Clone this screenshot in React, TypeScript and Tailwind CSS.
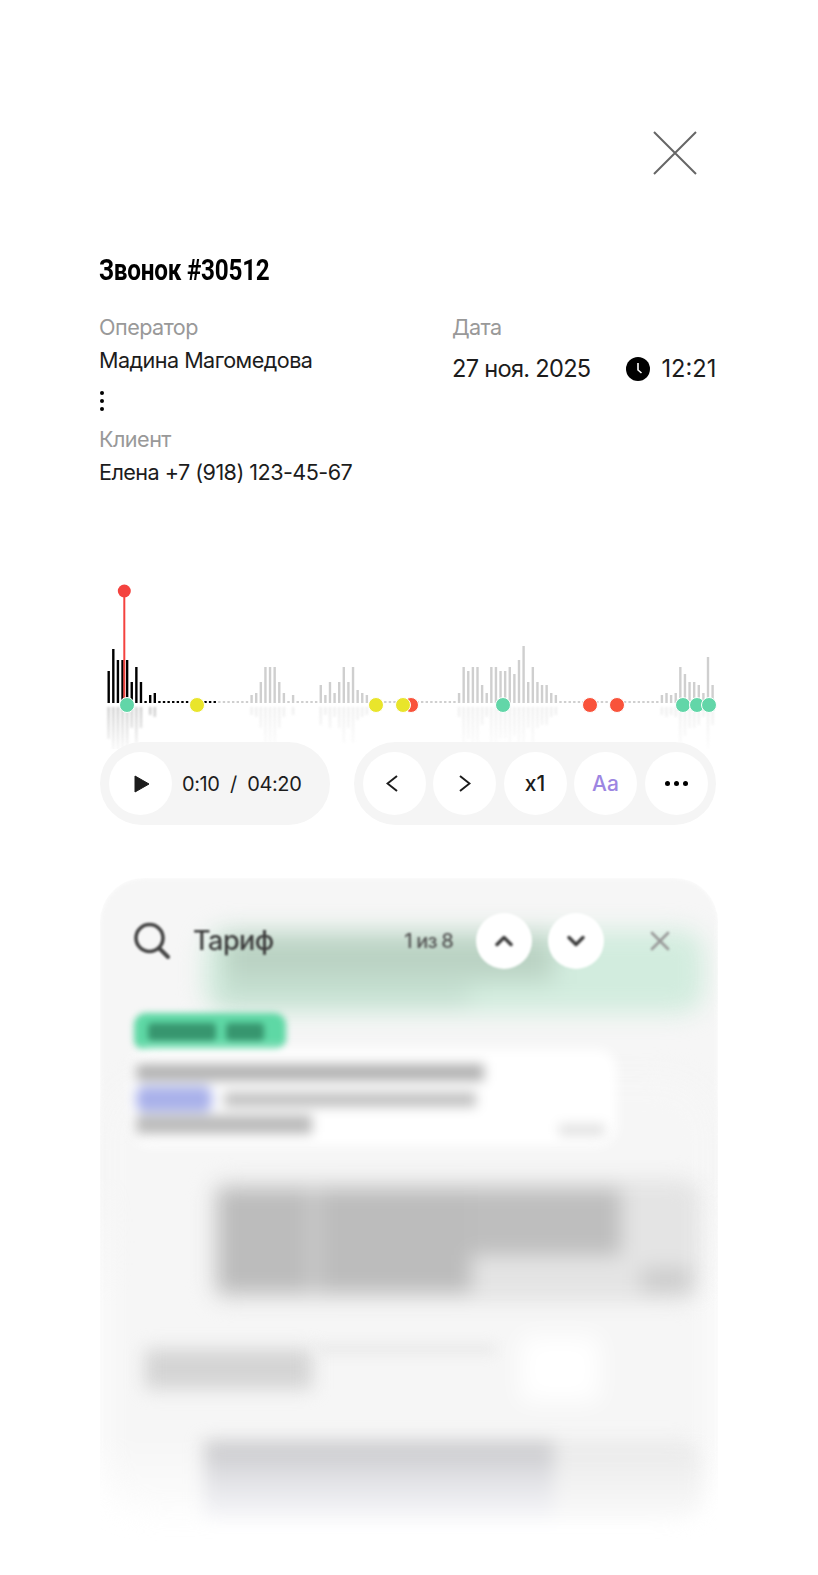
import React from "react";
import { ChevronDown, ChevronUp, X } from "lucide-react";

const PITCH = 4.61;
const START = 108.7;
const BASE = 123;

const buildBars = () => {
    const heights: number[] = new Array(132).fill(2);
    const put = (from: number, values: number[]) => values.forEach((v, i) => (heights[from + i] = v));
    put(0, [32, 54, 43, 43, 43, 21, 36, 21, 2, 8, 10]);
    put(31, [8, 10, 21, 36, 36, 36, 21, 10, 2, 8]);
    put(46, [18, 8, 21, 10, 21, 36, 21, 36, 13, 10, 8]);
    put(76, [10, 36, 32, 36, 36, 18, 10, 36, 36, 32, 32, 36, 29, 43, 57, 21, 36, 21, 18, 18, 10, 8]);
    put(120, [8, 10, 8, 10, 36, 29, 21, 21, 18, 10, 46, 18]);
    return heights;
};

const bars = buildBars();

const markers = [
    { x: 411, color: "#f9533b" },
    { x: 127, color: "#62d6a8" },
    { x: 197, color: "#e9e52b" },
    { x: 376, color: "#e9e52b" },
    { x: 403, color: "#e9e52b" },
    { x: 503, color: "#62d6a8" },
    { x: 590, color: "#f9533b" },
    { x: 617, color: "#f9533b" },
    { x: 683, color: "#62d6a8" },
    { x: 697, color: "#62d6a8" },
    { x: 709, color: "#62d6a8" },
];

const Waveform = () => (
    <svg width="818" height="162" viewBox="0 0 818 162" className="-ml-[100px] block overflow-visible">
        <defs>
            <linearGradient id="fade" x1="0" y1="0" x2="0" y2="1">
                <stop offset="0" stopColor="#fff" stopOpacity="0.4" />
                <stop offset="1" stopColor="#fff" stopOpacity="0.05" />
            </linearGradient>
            <mask id="reflect" maskUnits="userSpaceOnUse" x="0" y={BASE + 2} width="818" height="44">
                <rect x="0" y={BASE + 2} width="818" height="44" fill="url(#fade)" />
            </mask>
            <filter id="soft" x="-5%" y="-20%" width="110%" height="140%">
                <feGaussianBlur stdDeviation="1.1" />
            </filter>
        </defs>

        <g mask="url(#reflect)">
            <g filter="url(#soft)">
                {bars.map((h, i) =>
                    h > 2 ? (
                        <rect
                            key={i}
                            x={START + i * PITCH - 1.2}
                            y={BASE + 4}
                            width="2.4"
                            height={h}
                            fill={i < 24 ? "#777" : "#d4d4d4"}
                        />
                    ) : null,
                )}
            </g>
        </g>

        {bars.map((h, i) => (
            <rect
                key={i}
                x={START + i * PITCH - 1.2}
                y={BASE - h}
                width="2.4"
                height={h}
                fill={i < 24 ? "#000" : "#cfcfcf"}
            />
        ))}

        <line x1="124.3" y1="11" x2="124.3" y2={BASE} stroke="#f4433f" strokeWidth="2" />
        <circle cx="124.3" cy="11" r="6.5" fill="#f4433f" />

        {markers.map((m) => (
            <circle key={m.x} cx={m.x} cy={BASE + 2} r="7.5" fill={m.color} stroke="#fff" strokeWidth="1" />
        ))}
    </svg>
);

const RoundButton = ({ children }: { children: React.ReactNode }) => (
    <div className="flex h-[63px] w-[63px] items-center justify-center rounded-full bg-white">{children}</div>
);

const SearchBar = () => (
    <div className="absolute inset-x-0 top-[35px] z-10 flex h-[56px] items-center pl-[33px] pr-[42px] text-[#3d3d3d] blur-[1px]">
        <svg width="38" height="38" viewBox="0 0 38 38" fill="none" className="shrink-0">
            <circle cx="16.5" cy="16" r="13.5" stroke="#444" strokeWidth="3.6" />
            <path d="M26 26 L35 35" stroke="#444" strokeWidth="4" strokeLinecap="round" />
        </svg>
        <span className="ml-[22px] text-[27px] font-medium tracking-[-0.02em]">Тариф</span>
        <span className="ml-auto text-[20px] font-medium tracking-[-0.04em] text-[#555]">1 из 8</span>
        <div className="ml-[23px] flex h-[56px] w-[56px] items-center justify-center rounded-full bg-white">
            <ChevronUp className="h-7 w-7" strokeWidth={3} />
        </div>
        <div className="ml-[16px] flex h-[56px] w-[56px] items-center justify-center rounded-full bg-white">
            <ChevronDown className="h-7 w-7" strokeWidth={3} />
        </div>
        <X className="ml-[40px] h-8 w-8 text-[#999]" strokeWidth={2} />
    </div>
);

const Conversation = () => (
    <div className="relative h-[665px] w-full">
        <div className="absolute inset-x-0 top-0 h-[430px] rounded-t-[44px] bg-[#f6f6f6] blur-[2px] [mask-image:linear-gradient(to_bottom,black_70%,transparent)]" />
        <div className="absolute inset-x-[2px] bottom-[20px] top-[200px] rounded-[56px] bg-[#f6f6f6] blur-[14px]" />
        <SearchBar />
        <div className="relative flex flex-col pt-[52px]">
            <div className="relative ml-[104px] mr-[14px] h-[83px] rounded-[24px] bg-[#d2ecde] blur-[12px]">
                <div className="absolute left-[20px] right-[150px] top-[4px] h-[46px] bg-[#bad2c3]" />
                <div className="absolute bottom-[12px] left-[16px] h-[12px] w-[250px] bg-[#bbd6c7]" />
            </div>
            <div className="ml-[34px] flex h-[38px] w-[152px] items-center gap-[10px] rounded-[12px] bg-[#5ed8a5] px-[14px] blur-[3px]">
                <div className="h-[18px] w-[68px] rounded bg-[#37966f]" />
                <div className="h-[18px] w-[38px] rounded bg-[#37966f]" />
            </div>
            <div className="relative ml-[30px] mt-[-2px] h-[97px] w-[487px] rounded-[20px] bg-white blur-[6px]">
                <div className="ml-[6px] mt-[15px] h-[17px] w-[348px] bg-[#b2b2b2]" />
                <div className="mt-[5px] flex items-center">
                    <div className="ml-[6px] h-[26px] w-[76px] rounded-lg bg-[#a9b1ea]" />
                    <div className="ml-[12px] h-[15px] w-[252px] bg-[#c2c2c2]" />
                </div>
                <div className="ml-[6px] mt-[3px] h-[19px] w-[176px] bg-[#bbbbbb]" />
                <div className="absolute bottom-[10px] right-[12px] h-[12px] w-[46px] bg-[#e2e2e2]" />
            </div>
            <div className="relative ml-[109px] mr-[18px] mt-[33px] h-[123px] rounded-[20px] bg-[#e4e4e4] blur-[10px]">
                <div className="absolute left-[10px] top-[10px] h-[103px] w-[88px] bg-[#bcbcbc]" />
                <div className="absolute left-[98px] top-[10px] h-[103px] w-[14px] bg-[#cacaca]" />
                <div className="absolute left-[112px] top-[10px] h-[103px] w-[150px] bg-[#bcbcbc]" />
                <div className="absolute left-[262px] top-[10px] h-[66px] w-[150px] bg-[#bebebe]" />
                <div className="absolute bottom-[10px] right-[10px] h-[24px] w-[49px] bg-[#cccccc]" />
            </div>
            <div className="relative mt-[47px] h-[40px]">
                <div className="absolute left-[45px] top-0 h-[40px] w-[167px] bg-[#d4d4d4] blur-[9px]" />
                <div className="absolute left-[215px] top-[-6px] h-[12px] w-[180px] bg-[#ebebeb] blur-[6px]" />
                <div className="absolute left-[420px] top-[-13px] h-[66px] w-[80px] bg-white blur-[12px]" />
            </div>
            <div className="relative ml-[104px] mr-[18px] mt-[53px] h-[80px] rounded-[20px] bg-[#e8e8e8] blur-[9px]">
                <div className="h-full w-[350px] bg-gradient-to-b from-[#c2c2c4] to-[#d8d9e4]" />
            </div>
        </div>
    </div>
);

export default function App() {
    return (
        <div className="min-h-[1575px] w-full overflow-hidden bg-white px-[100px] font-['Inter',sans-serif] text-[#1c1c1c]">
            <div className="flex justify-end pr-[21px] pt-[131px]">
                <svg width="44" height="44" viewBox="0 0 44 44" fill="none">
                    <path d="M1 1 L43 43 M43 1 L1 43" stroke="#666" strokeWidth="2" />
                </svg>
            </div>

            <h1 className="-ml-px mt-[77px] origin-left scale-x-[0.81] whitespace-nowrap font-['Roboto',sans-serif] text-[30px] leading-[36px] font-bold tracking-[-0.01em] text-black">
                Звонок #30512
            </h1>

            <div className="mt-[23px] grid grid-cols-[352px_1fr]">
                <div className="-ml-px text-[21.6px] tracking-[-0.025em]">
                    <div className="leading-[33px] text-[#999]">Оператор</div>
                    <div className="leading-[33px]">Мадина Магомедова</div>
                    <div className="mt-[14px] flex w-[4px] flex-col gap-[4px] pl-px">
                        <span className="h-1 w-1 rounded-full bg-black" />
                        <span className="h-1 w-1 rounded-full bg-black" />
                        <span className="h-1 w-1 rounded-full bg-black" />
                    </div>
                    <div className="mt-[12px] leading-[33px] text-[#999]">Клиент</div>
                    <div className="leading-[33px]">Елена +7 (918) 123-45-67</div>
                </div>
                <div>
                    <div className="text-[21.6px] leading-[33px] tracking-[-0.03em] text-[#999]">Дата</div>
                    <div className="mt-[8px] flex items-center whitespace-nowrap text-[23.6px] leading-[33px] tracking-[-0.03em]">
                        <span>27 ноя. 2025</span>
                        <svg width="24" height="24" viewBox="0 0 24 24" className="ml-[35px]">
                            <circle cx="12" cy="12" r="12" fill="#000" />
                            <path d="M12 6 V13 L15.5 16" fill="none" stroke="#fff" strokeWidth="1.6" />
                        </svg>
                        <span className="ml-[12px] tracking-[0em]">12:21</span>
                    </div>
                </div>
            </div>

            <div className="mt-[91px]">
                <Waveform />
            </div>

            <div className="relative flex justify-between">
                <div className="flex h-[83px] w-[230px] items-center rounded-full bg-[#f5f5f5] pl-[9px] text-[20px] tracking-[-0.02em]">
                    <RoundButton>
                        <svg width="16" height="18" viewBox="0 0 16 18" className="ml-[2px]">
                            <path d="M1 1 L15 9 L1 17 Z" fill="#1c1c1c" stroke="#1c1c1c" strokeLinejoin="round" />
                        </svg>
                    </RoundButton>
                    <span className="ml-[10px] whitespace-nowrap">0:10&nbsp; /&nbsp; 04:20</span>
                </div>
                <div className="mr-[2px] flex h-[83px] w-[362px] items-center justify-center gap-[7.5px] rounded-full bg-[#f5f5f5]">
                    <RoundButton>
                        <svg width="12" height="17" viewBox="0 0 12 17" fill="none" className="-ml-[4px]">
                            <path d="M11 1 L1.5 8.5 L11 16" stroke="#1c1c1c" strokeWidth="2" />
                        </svg>
                    </RoundButton>
                    <RoundButton>
                        <svg width="12" height="17" viewBox="0 0 12 17" fill="none">
                            <path d="M1 1 L10.5 8.5 L1 16" stroke="#1c1c1c" strokeWidth="2" />
                        </svg>
                    </RoundButton>
                    <RoundButton>
                        <span className="text-[21px] font-medium">x1</span>
                    </RoundButton>
                    <RoundButton>
                        <span className="text-[21px] font-medium text-[#9d86e2]">Aa</span>
                    </RoundButton>
                    <RoundButton>
                        <span className="flex gap-[4px]">
                            <span className="h-[5px] w-[5px] rounded-full bg-black" />
                            <span className="h-[5px] w-[5px] rounded-full bg-black" />
                            <span className="h-[5px] w-[5px] rounded-full bg-black" />
                        </span>
                    </RoundButton>
                </div>
            </div>

            <div className="mt-[53px] [mask-image:linear-gradient(to_bottom,black_84%,transparent_100%)]">
                <Conversation />
            </div>
        </div>
    );
}
